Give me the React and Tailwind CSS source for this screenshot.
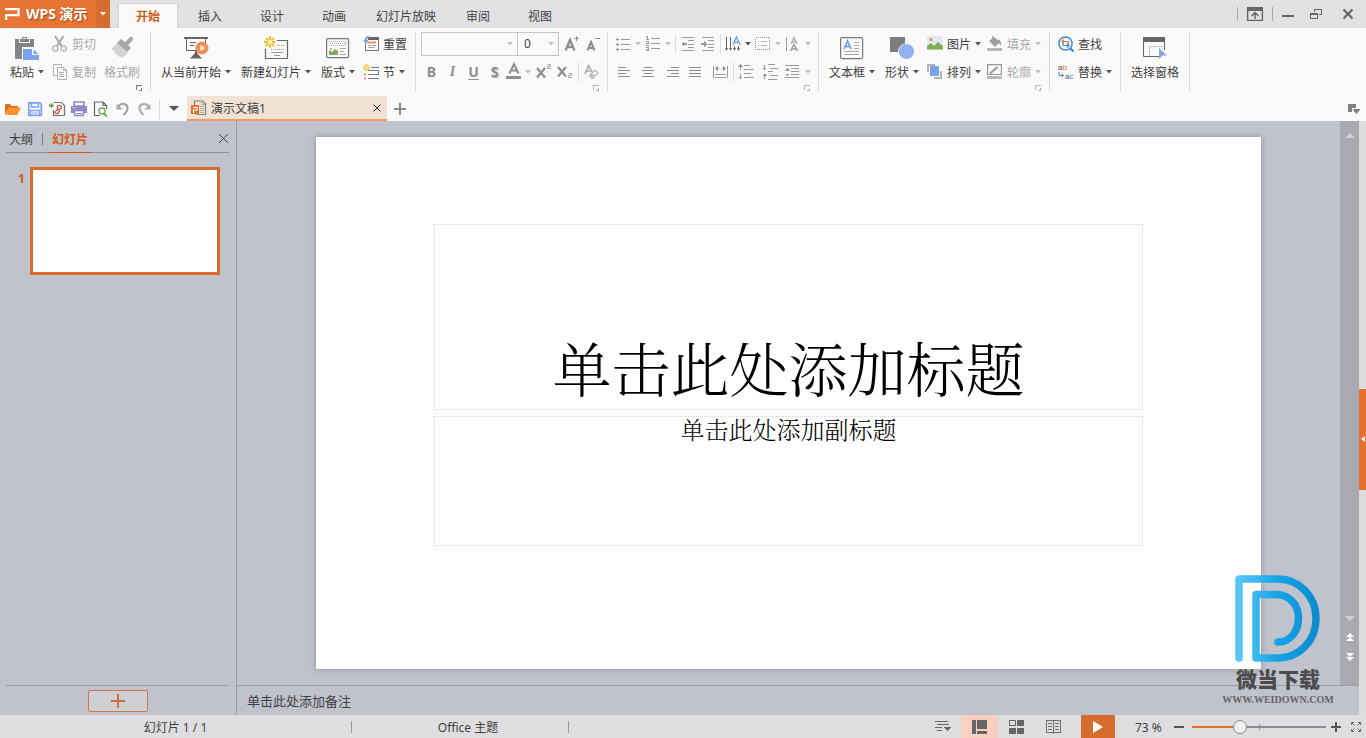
import React from "react";

const GRAY = "#999999";
const DARK = "#666666";
const BLUE = "#7ba3ec";

function Svg({ w = 16, h = 16, children, crisp = false }) {
  return (
    <svg
      width={w}
      height={h}
      viewBox={`0 0 ${w} ${h}`}
      fill="none"
      aria-hidden="true"
      className="block shrink-0 overflow-visible"
      shapeRendering={crisp ? "crispEdges" : "auto"}
    >
      {children}
    </svg>
  );
}

function Caret({ color = "#555555" }) {
  return (
    <Svg w={6} h={4}>
      <path d="M0 0h6L3 3.5z" fill={color} />
    </Svg>
  );
}

/* ---------- large ribbon icons ---------- */

const PasteIcon = () => (
  <Svg w={24} h={24}>
    <path d="M0 3h4v4h11V3h4v8H7v12H0z" fill="#858585" />
    <path d="M5 6V3h2V1h5v2h2v3z" fill="#858585" />
    <rect x="8" y="2" width="3" height="1" fill="#fafafa" />
    <path d="M8 13h9v6h7v5H8z" fill={BLUE} />
    <path d="M18.500 13.500l5 4.500h-5z" fill={BLUE} />
  </Svg>
);

const BrushIcon = () => (
  <Svg w={24} h={24}>
    <path d="M7 7l11 10-6 5c-1-1-2-1-2-2l-2 1-1-3-2 0-1-3-3-2c3-2 4-4 6-6z" fill="#d2d2d2" />
    <path d="M7 7l4-4 4 3 5-5c2-1 4 1 3 3l-5 5 3 3-4 4z" fill="#a8a8a8" />
  </Svg>
);

const PresentIcon = () => (
  <Svg w={24} h={24}>
    <path d="M0 2h24" stroke={DARK} strokeWidth="2" />
    <path d="M2.500 3v11.500h19V3M6 6.500h6M6 9.500h4" stroke={DARK} />
    <path d="M11 15h2v2l5 5.500H6l5-5.500z" fill={DARK} />
    <circle cx="18" cy="12" r="6.500" fill="#ee9055" />
    <path d="M16.500 9l4.500 3-4.500 3z" fill="#fff" />
  </Svg>
);

const Spark = ({ s = 1 }) => (
  <g transform={`scale(${s})`}>
    <path
      d="M6 0v12M0 6h12M2 2l8 8M10 2l-8 8"
      stroke="#f8b92c"
      strokeWidth="2"
      strokeDasharray="3.500 4.500"
    />
    <circle cx="6" cy="6" r="2.800" fill="#fff1a8" stroke="#f8c943" />
  </g>
);

const NewSlideIcon = () => (
  <Svg w={24} h={24}>
    <path d="M13 4.500h10.500v18h-22V13" stroke={DARK} strokeWidth="1.200" />
    <path d="M13 9.500h8M7 13.500h14" stroke={GRAY} strokeDasharray="1 1" />
    <path d="M7 16.500h12M10 19.500h6" stroke={GRAY} />
    <Spark />
  </Svg>
);

const LayoutIcon = () => (
  <Svg w={24} h={24}>
    <rect x="0.600" y="2.600" width="22" height="19" rx="1" stroke="#777" strokeWidth="1.200" />
    <path d="M3 5.500h17M4 7.500h17M3 9.500h17" stroke="#aaa" strokeDasharray="1 1" />
    <path d="M3 18v-4l3 2 3-3 3 2v4H3z" fill="#79ad58" />
    <circle cx="5" cy="13" r="1" fill="#ee9459" />
    <path d="M14 12.500h6M14 15.500h4M14 18.500h6" stroke="#aaa" />
  </Svg>
);

const TextBoxIcon = () => (
  <Svg w={24} h={24}>
    <rect x="0.600" y="1.600" width="22" height="21" rx="1.500" stroke="#777" strokeWidth="1.200" />
    <path d="M4 13L7.500 5 11 13M5.500 10.500h4" stroke={BLUE} strokeWidth="1.800" />
    <path d="M14 6.500h5M14 9.500h5M14 12.500h5M4 15.500h15M4 18.500h15" stroke="#aaa" />
  </Svg>
);

const ShapesIcon = () => (
  <Svg w={24} h={24}>
    <path d="M0 1h15v6.500A8.500 8.500 0 0 0 8 16H0z" fill="#7d7d7d" />
    <circle cx="16.500" cy="15.500" r="7.600" fill="#90b2ee" />
  </Svg>
);

const SelectPaneIcon = () => (
  <Svg w={24} h={24}>
    <path d="M0 1h22v5H0z" fill={DARK} />
    <path d="M0.500 5v15.500h16M21.500 5v9" stroke={DARK} />
    <path d="M6.500 20v-9.500H21" stroke="#aaa" strokeDasharray="2 1.500" />
    <path d="M16 12l8 7.500h-4.500L16 23z" fill="#88a4e6" />
  </Svg>
);

/* ---------- small ribbon icons ---------- */

const CutIcon = () => (
  <Svg>
    <path d="M3 0l6.500 10M11.500 0L5 10" stroke="#a5a5a5" strokeWidth="2" />
    <circle cx="3.300" cy="12.500" r="2.600" stroke="#b0b0b0" strokeWidth="1.300" />
    <circle cx="11.700" cy="12.500" r="2.600" stroke="#b0b0b0" strokeWidth="1.300" />
  </Svg>
);

const CopyIcon = () => (
  <Svg>
    <path d="M5 11.500H1.500v-11h8V2M5.500 3.500h6l3 3v9h-9z" stroke="#b0b0b0" />
    <path d="M11.500 3.500v3h3M7 8.500h5M7 10.500h5M7 12.500h5" stroke="#b0b0b0" />
  </Svg>
);

const ResetIcon = () => (
  <Svg>
    <path d="M5 1h11v3H5z" fill={DARK} />
    <path d="M15.500 3v11.500h-13V7" stroke="#777" />
    <path d="M4 6.500h9" stroke="#ee9459" strokeWidth="2" />
    <path d="M5 9.500h3M9 9.500h4M5 11.500h7" stroke="#aaa" />
    <path d="M6 1C3 1 2.500 2.500 2.500 5" stroke={BLUE} strokeWidth="2" />
    <path d="M0 4h5.500L2.800 7.500z" fill={BLUE} />
  </Svg>
);

const SectionIcon = () => (
  <Svg>
    <path d="M8 3.500h8M5 6.500h10.500v4H5M5 14.500h11" stroke="#777" />
    <path d="M1 10.500h2M1 14.500h2" stroke="#ee7a45" strokeWidth="1.500" />
    <Spark s={0.6} />
  </Svg>
);

const PictureIcon = () => (
  <Svg>
    <rect width="16" height="14" fill="#e3e8ee" />
    <circle cx="4" cy="3.500" r="1.500" fill="#ee8844" />
    <path d="M0 13.500V10l4-3 3 3 4-4 5 4v3.500z" fill="#7eae58" />
  </Svg>
);

const ArrangeIcon = () => (
  <Svg>
    <path d="M0 0h8v2H2v6H0zM15 7v8H7v-2h6V7z" fill="#b4b4b4" />
    <rect x="3" y="2" width="9" height="10" fill={BLUE} />
  </Svg>
);

const FillIcon = () => (
  <Svg>
    <path d="M2 5l5-4 6 5-5 5z" fill="#a0a0a0" />
    <path d="M6 0v4M11 4c2 1 2.500 3 2.500 5" stroke="#a0a0a0" strokeWidth="1.500" />
    <rect y="12" width="15" height="3" fill="#b8b8b8" />
  </Svg>
);

const OutlineIcon = () => (
  <Svg>
    <path d="M0.600 10.500V0.600h13.800v9.900z" stroke="#999" strokeWidth="1.200" />
    <path d="M3 9.500L10.500 3" stroke="#999" strokeWidth="2.200" />
    <rect y="12" width="15" height="3" fill="#b8b8b8" />
  </Svg>
);

const FindIcon = () => (
  <Svg>
    <circle cx="7.500" cy="7.500" r="6.600" stroke="#3f86d8" strokeWidth="1.500" />
    <path d="M12 12l3.500 3.500" stroke="#3f86d8" strokeWidth="2.200" />
    <path d="M4 5.500h6.500V8M6 3.500l-2 2 2 2" stroke="#d3813f" strokeWidth="1.200" />
    <path d="M11 9.500H5V7M9 7.500l2 2-2 2" stroke="#3f86d8" strokeWidth="1.200" />
  </Svg>
);

const ReplaceIcon = () => (
  <Svg>
    <text x="0" y="6" fontSize="8" fontFamily="Liberation Sans, sans-serif" fill="#555">
      a<tspan fill="#d3813f">b</tspan>
    </text>
    <text x="7" y="15" fontSize="8" fontFamily="Liberation Sans, sans-serif" fill="#555">
      a<tspan fill="#3f86d8">c</tspan>
    </text>
    <path d="M1 8v3.500h4M3.500 9.500l2 2-2 2" stroke="#3f86d8" />
  </Svg>
);

/* ---------- paragraph icons ---------- */

const Lines = ({ rows, color = "#8a8a8a" }) => (
  <Svg crisp>
    {rows.map(([x, y, w], i) => (
      <rect key={i} x={x} y={y} width={w} height="1" fill={color} />
    ))}
  </Svg>
);

const BulletIcon = () => (
  <Svg crisp>
    <path d="M1 3.500h3M1 8.500h3M1 13.500h3M2.500 2v3M2.500 7v3M2.500 12v3M6 3.500h9M6 8.500h9M6 13.500h9" stroke={GRAY} />
  </Svg>
);
const NumberIcon = () => (
  <Svg crisp>
    <path d="M1 0.500h1.500V4M1 3.500h3M1 5.500h2.500v2H1.500v1.500H4M1 11.500h2.500v3H1M1.500 13h2M6 2.500h9M6 7.500h9M6 12.500h9" stroke={GRAY} />
  </Svg>
);
const OutdentIcon = () => (
  <Svg crisp>
    <path d="M2 1.500h12M8 4.500h6M8 8.500h6M8 11.500h6M2 14.500h12" stroke={GRAY} />
    <path d="M1 8l3-3v2h3v2H4v2z" fill={GRAY} />
  </Svg>
);
const IndentIcon = () => (
  <Svg crisp>
    <path d="M2 1.500h12M8 4.500h6M8 8.500h6M8 11.500h6M2 14.500h12" stroke={GRAY} />
    <path d="M7 8L4 5v2H1v2h3v2z" fill={GRAY} />
  </Svg>
);
const TextDirIcon = () => (
  <Svg>
    <path d="M1.500 1v13M5.500 1v13M9.500 10v4M13.500 10v4" stroke="#666" />
    <path d="M0 12h3l-1.500 3zM4 12h3l-1.500 3zM8 12h3l-1.500 3zM12 12h3l-1.500 3z" fill="#666" />
    <path d="M8 9l3.500-8L15 9M9 6.500h5" stroke={BLUE} strokeWidth="1.500" />
  </Svg>
);
const AlignBoxIcon = () => (
  <Svg crisp>
    <rect x="0.500" y="1.500" width="14" height="12" stroke={GRAY} strokeDasharray="1 1" />
    <path d="M3 5.500h1M6 5.500h6M3 9.500h1M6 9.500h6" stroke="#b5b5b5" />
  </Svg>
);
const StackAIcon = () => (
  <Svg>
    <path d="M1.500 1v14" stroke={GRAY} />
    <path d="M6 8l3-6.500L12 8M7 6h4" stroke="#b0b0b0" strokeWidth="1.500" />
    <path d="M5.500 15L9 8.500l3.500 6.500M7 13h4" stroke={GRAY} strokeWidth="1.500" />
  </Svg>
);
const DistributeIcon = () => (
  <Svg crisp>
    <path d="M0.500 2v12M14.500 2v12M2 10.500h11M2 13.500h11M4 4.500h2M9 4.500h2" stroke={GRAY} />
    <path d="M2 4.500l3-2.500v5zM13 4.500l-3-2.500v5z" fill={GRAY} />
  </Svg>
);
const LineSpaceIcon = () => (
  <Svg crisp>
    <path d="M2.500 1v5M2.500 10v5M6 1.500h6M6 5.500h10M6 9.500h7M6 13.500h10" stroke={GRAY} />
    <path d="M0 3l2.500-3L5 3zM0 12.500L2.500 15 5 12.500z" fill={GRAY} />
  </Svg>
);
const ParaSpaceIcon = () => (
  <Svg crisp>
    <path d="M2.500 1v5M2.500 10v5M6 0.500h7M8 4.500h8M6 7.500h5M8 11.500h8M6 15.500h9" stroke={GRAY} />
    <path d="M0 3.500L2.500 6 5 3.500zM0 12l2.500-2.500L5 12z" fill={GRAY} />
  </Svg>
);
const SpacingMenuIcon = () => (
  <Svg crisp>
    <path d="M1 1.500h14M7 4.500h8M7 7.500h8M7 10.500h8M1 13.500h14" stroke={GRAY} />
    <path d="M1 6.500L3.500 4 6 6.500zM1 9.500L3.500 12 6 9.500z" fill={GRAY} />
  </Svg>
);

const EraserIcon = () => (
  <Svg>
    <path d="M1 10L4.500 1.500 8 8M2.500 7h4" stroke="#a8a8a8" strokeWidth="1.500" />
    <path d="M6 11l5-5 3 3-5 5c-1 1-4-1-3-3z" fill="#fafafa" stroke="#b5b5b5" strokeWidth="1.200" />
    <path d="M6 11l2-2 3.500 3L9 14.500C7 14 6 13 6 11z" fill="#c0c0c0" />
  </Svg>
);

/* ---------- quick access icons ---------- */

const OpenIcon = () => (
  <Svg>
    <path d="M0 14V3h5l1.500 2H13v2H4z" fill="#dd7513" />
    <path d="M0.500 14L4 6.500h12L12.500 14z" fill="#ff9233" />
  </Svg>
);
const SaveIcon = () => (
  <Svg>
    <path d="M1.800 1.800h11l1.500 1.500v11H1.800z" stroke={BLUE} strokeWidth="1.700" />
    <path d="M4.500 2v4h7V2M3.500 14V9.500h9V14" stroke={BLUE} strokeWidth="1.400" />
    <path d="M5 12h6" stroke={BLUE} />
  </Svg>
);
const ExportIcon = () => (
  <Svg>
    <path d="M4.500 1.500h8l3 3v10h-11V9" stroke="#707070" strokeWidth="1.200" />
    <path d="M0 4.500h3" stroke="#5fa044" strokeWidth="2" />
    <path d="M2 1.500l3 3-3 3z" fill="#5fa044" />
    <path d="M8.500 5v3.500M8.500 4.500h2.500c1.500 0 2 3 0 3.500-3 1-5 1.500-5 3.500 0 1.500 3 1.500 3.500 0L11 9" stroke="#d23c34" strokeWidth="1.200" />
  </Svg>
);
const PrintIcon = () => (
  <Svg>
    <path d="M3 1h10v4H3z" stroke="#8b87cd" strokeWidth="1.600" />
    <path d="M0 5h16v7H0z" fill="#8b87cd" />
    <path d="M3.500 9.500h9v5h-9z" fill="#fafafa" stroke="#8b87cd" strokeWidth="1.400" />
    <path d="M5 12.500h6" stroke="#8b87cd" />
    <path d="M1 6.500h4" stroke="#c5c2ea" />
  </Svg>
);
const PreviewIcon = () => (
  <Svg>
    <path d="M7 14.500H1.500V1H10l3.500 3.500V8M10 1v3.500h3" stroke="#666" strokeWidth="1.200" />
    <circle cx="9" cy="10" r="3" stroke="#6aa84f" strokeWidth="1.300" />
    <path d="M11 12.500l3 3" stroke="#6aa84f" strokeWidth="2" />
  </Svg>
);
const UndoIcon = () => (
  <Svg>
    <path d="M3 5.500c3.500-4 9.500-3 9.500 1.500 0 3-2 5-4 7" stroke="#a5a5a5" strokeWidth="2.200" />
    <path d="M1.500 3v5.500H8z" fill="#a5a5a5" />
  </Svg>
);
const RedoIcon = () => (
  <Svg>
    <path d="M12 5.500C8.500 1.500 2.500 2.500 2.500 7c0 3 2 5 4 7" stroke="#b0b0b0" strokeWidth="2.200" />
    <path d="M13.500 3v5.500H7z" fill="#b0b0b0" />
  </Svg>
);
const DocIcon = () => (
  <Svg>
    <path d="M3.500 5V1h8l3 3v10.500h-9" stroke="#808080" strokeWidth="1.200" />
    <path d="M11 1.500v3h3M9 6.500h4M9 8.500h4M9 10.500h4M9 12.500h4" stroke="#aaa" />
    <path d="M0 5h8v9H0z" fill="#e8722c" />
    <path d="M2 7.500h4v2.500H2.500V13" stroke="#fff" strokeWidth="1.200" />
  </Svg>
);

/* ---------- ribbon building blocks ---------- */

function Group({ width, launcher, launcherColor = "#b5b5b5", children }) {
  return (
    <section className={`flex h-[59px] shrink-0 flex-col border-r border-[#dcdcdc] pl-[5px] ${width}`}>
      <div className="flex h-[52px] shrink-0">{children}</div>
      {launcher && (
        <button type="button" aria-label={launcher} className="mt-px mr-2 self-end">
          <Svg w={6} h={6} crisp>
            <path d="M0.500 5V0.500H6M2.500 5.500h3v-3" stroke={launcherColor} />
          </Svg>
        </button>
      )}
    </section>
  );
}

const Label = ({ children }) => <span className="pt-0.5">{children}</span>;

function BigButton({ icon, label, caret, disabled }) {
  return (
    <button type="button" className="flex shrink-0 flex-col items-center px-[5px] pt-1">
      {icon}
      <span className={`mt-1 flex h-4 items-center gap-1 ${disabled ? "text-[#a6a6a6]" : ""}`}>
        <Label>{label}</Label>
        {caret && <Caret />}
      </span>
    </button>
  );
}

function SmallButton({ icon, label, caret, disabled }) {
  return (
    <button
      type="button"
      className={`flex h-6 items-center gap-1 px-[3px] ${disabled ? "text-[#a6a6a6]" : ""}`}
    >
      {icon}
      <Label>{label}</Label>
      {caret && <Caret color={disabled ? "#c0c0c0" : "#555555"} />}
    </button>
  );
}

function Tool({ width = "w-4", label, children }) {
  return (
    <button type="button" aria-label={label} className={`flex h-6 shrink-0 items-center justify-center ${width}`}>
      {children}
    </button>
  );
}

const Column = ({ children }) => <div className="flex shrink-0 flex-col gap-1">{children}</div>;

const Combo = ({ label, width, options }) => (
  <div className={`flex h-6 items-center border border-[#c6c6c6] bg-[#fafafa] pr-1 ${width}`}>
    <select aria-label={label} className="h-[22px] min-w-0 flex-1 appearance-none bg-transparent pl-1.5 text-xs leading-5 outline-none">
      {options.map((value) => (
        <option key={value}>{value}</option>
      ))}
    </select>
    <Caret color="#c0c0c0" />
  </div>
);

const MENU = ["开始", "插入", "设计", "动画", "幻灯片放映", "审阅", "视图"];

function TitleBar() {
  return (
    <header className="flex h-7 shrink-0 bg-[#e2e2e5]">
      <button type="button" className="flex w-24 shrink-0 items-center gap-1.5 bg-[#e87433] pl-[5px] text-sm leading-4 font-bold text-white [text-shadow:1px_1px_1px_#a04a18]">
        <Svg w={15} h={12}>
          <path d="M0 1.200h13.500v6H1.200V12" stroke="#fff" strokeWidth="2.200" />
        </Svg>
        <span className="whitespace-nowrap">WPS 演示</span>
      </button>
      <button type="button" aria-label="应用菜单" className="flex w-3.5 shrink-0 items-center justify-center bg-[#d66d30]">
        <Caret color="#ffffff" />
      </button>
      <nav className="ml-[7px] flex items-end">
        {MENU.map((name, i) =>
          i === 0 ? (
            <a key={name} href="#start" className="mx-px flex h-[25px] w-[60px] items-center justify-center border border-b-0 border-[#d4d4d8] bg-[#fafafa] font-bold text-[#d35a14]">
              <Label>{name}</Label>
            </a>
          ) : (
            <a key={name} href="#menu" className={`flex h-[25px] items-center justify-center ${name.length > 2 ? "w-[82px]" : "w-[62px]"}`}>
              <Label>{name}</Label>
            </a>
          )
        )}
      </nav>
      <div className="ml-auto flex items-center">
        <div className="flex h-3.5 w-9 items-center justify-center border-x border-[#a8a8a8]">
          <button type="button" aria-label="隐藏功能区">
            <Svg>
              <path d="M0 1h16v4H0z" fill={DARK} />
              <path d="M0.600 4v10.400h14.800V4M8 13V7M4.500 10L8 6.500l3.500 3.500" stroke={DARK} strokeWidth="1.400" />
            </Svg>
          </button>
        </div>
        <button type="button" aria-label="最小化" className="flex h-7 w-[29px] items-center justify-center">
          <Svg w={12} h={6} crisp><path d="M0 5h12" stroke={DARK} strokeWidth="2" /></Svg>
        </button>
        <button type="button" aria-label="还原" className="flex h-7 w-7 items-center justify-center">
          <Svg w={12} h={10} crisp>
            <path d="M4.500 3V0.500h7v5H9" stroke={DARK} />
            <path d="M0 4h8v6H0z" fill={DARK} />
            <path d="M1 6h6v3H1z" fill="#e2e2e5" />
          </Svg>
        </button>
        <button type="button" aria-label="关闭" className="flex h-7 w-9 items-center justify-center">
          <Svg w={10} h={10}><path d="M0.500 0.500l9 9M9.500 0.500l-9 9" stroke={DARK} strokeWidth="2.200" /></Svg>
        </button>
      </div>
    </header>
  );
}

function Ribbon() {
  const lightCaret = <Caret color="#c0c0c0" />;
  return (
    <div className="flex h-16 shrink-0 items-start pt-1">
      <Group width="w-[151px]" launcher="剪贴板设置" launcherColor="#777777">
        <BigButton icon={<PasteIcon />} label="粘贴" caret />
        <Column>
          <SmallButton icon={<CutIcon />} label="剪切" disabled />
          <SmallButton icon={<CopyIcon />} label="复制" disabled />
        </Column>
        <BigButton icon={<BrushIcon />} label="格式刷" disabled />
      </Group>

      <Group width="w-[265px]">
        <BigButton icon={<PresentIcon />} label="从当前开始" caret />
        <BigButton icon={<NewSlideIcon />} label="新建幻灯片" caret />
        <BigButton icon={<LayoutIcon />} label="版式" caret />
        <Column>
          <SmallButton icon={<ResetIcon />} label="重置" />
          <SmallButton icon={<SectionIcon />} label="节" caret />
        </Column>
      </Group>

      <Group width="w-[192px]" launcher="字体设置">
        <div className="flex flex-col gap-1 font-bold text-[#8e8e8e]">
          <div className="flex items-center font-normal text-[#444444]">
            <Combo label="字体" width="w-[97px]" options={[""]} />
            <div className="-ml-px"><Combo label="字号" width="w-[42px]" options={["0"]} /></div>
            <div className="ml-0.5 flex">
              <Tool width="w-[22px]" label="增大字号">
                <Svg>
                  <path d="M1.500 14.500L6 4l4.500 10.500M3 11h6" stroke="#8e8e8e" strokeWidth="2.300" />
                  <path d="M12.500 0v5M10 2.500h5" stroke="#8e8e8e" shapeRendering="crispEdges" />
                </Svg>
              </Tool>
              <Tool width="w-[22px]" label="减小字号">
                <Svg>
                  <path d="M1.500 14.500L5 6l3.500 8.500M3 12h4.500" stroke="#8e8e8e" strokeWidth="2" />
                  <path d="M9 2.500h5" stroke="#8e8e8e" shapeRendering="crispEdges" />
                </Svg>
              </Tool>
            </div>
          </div>
          <div className="flex items-center text-sm leading-4">
            <Tool width="w-[21px]" label="加粗">B</Tool>
            <Tool width="w-[21px]" label="倾斜"><i className="font-['Liberation_Serif',serif]">I</i></Tool>
            <Tool width="w-[21px]" label="下划线"><span className="underline underline-offset-2">U</span></Tool>
            <Tool width="w-[21px]" label="阴影"><span className="[text-shadow:1px_1px_1px_#aaaaaa]">S</span></Tool>
            <Tool width="w-[18px]" label="字体颜色">
              <Svg>
                <path d="M3.500 9.500L8 0l4.500 9.500M5.500 6.500h5" stroke="#8e8e8e" strokeWidth="2" />
                <rect x="0" y="12" width="15" height="3" fill="#8e8e8e" />
              </Svg>
            </Tool>
            <Tool width="w-2.5" label="字体颜色选项">{lightCaret}</Tool>
            <Tool width="w-[21px]" label="上标">
              <Svg>
                <path d="M1 4l8 9.500M9 4l-8 9.500" stroke="#8e8e8e" strokeWidth="2.200" />
                <path d="M11.500 0.500h3v2h-3v2H15" stroke="#a5a5a5" />
              </Svg>
            </Tool>
            <Tool width="w-[21px]" label="下标">
              <Svg>
                <path d="M1 3l8 9.500M9 3l-8 9.500" stroke="#8e8e8e" strokeWidth="2.200" />
                <path d="M11.500 9.500h3v2h-3v2H15" stroke="#a5a5a5" />
              </Svg>
            </Tool>
            <div className="ml-[3px] flex h-5 items-center border-l border-[#dcdcdc]">
              <Tool width="w-[26px]" label="清除格式"><EraserIcon /></Tool>
            </div>
          </div>
        </div>
      </Group>

      <Group width="w-[211px]" launcher="段落设置">
        <Column>
          <div className="flex h-6 items-center">
            <div className="flex h-5 w-[63px] items-center border-r border-[#dcdcdc] pl-0.5">
              <Tool label="项目符号"><BulletIcon /></Tool>
              <Tool width="w-3.5" label="项目符号选项">{lightCaret}</Tool>
              <Tool label="编号"><NumberIcon /></Tool>
              <Tool width="w-3.5" label="编号选项">{lightCaret}</Tool>
            </div>
            <div className="flex h-5 w-[45px] items-center justify-center border-r border-[#dcdcdc]">
              <Tool width="w-5" label="减少缩进"><OutdentIcon /></Tool>
              <Tool width="w-5" label="增加缩进"><IndentIcon /></Tool>
            </div>
            <div className="flex h-5 items-center pl-1">
              <Tool label="文字方向"><TextDirIcon /></Tool>
              <Tool width="w-3.5" label="文字方向选项"><Caret /></Tool>
              <Tool label="对齐文本"><AlignBoxIcon /></Tool>
              <Tool width="w-3.5" label="对齐文本选项">{lightCaret}</Tool>
              <Tool label="文字排列"><StackAIcon /></Tool>
              <Tool width="w-3.5" label="文字排列选项">{lightCaret}</Tool>
            </div>
          </div>
          <div className="flex h-6 items-center">
            <div className="flex h-5 w-[121px] items-center border-r border-[#dcdcdc]">
              <Tool width="w-6" label="左对齐"><Lines rows={[[1, 3, 8], [1, 6, 12], [1, 9, 8], [1, 12, 12]]} /></Tool>
              <Tool width="w-6" label="居中"><Lines rows={[[3, 3, 8], [1, 6, 12], [3, 9, 8], [1, 12, 12]]} /></Tool>
              <Tool width="w-6" label="右对齐"><Lines rows={[[6, 3, 8], [2, 6, 12], [6, 9, 8], [2, 12, 12]]} /></Tool>
              <Tool width="w-6" label="两端对齐"><Lines rows={[[0, 3, 12], [0, 6, 12], [0, 9, 12], [0, 12, 12]]} /></Tool>
              <Tool width="w-6" label="分散对齐"><DistributeIcon /></Tool>
            </div>
            <Tool width="w-6" label="行距"><LineSpaceIcon /></Tool>
            <Tool width="w-6" label="段落间距"><ParaSpaceIcon /></Tool>
            <Tool width="w-5" label="间距"><SpacingMenuIcon /></Tool>
            <Tool width="w-3" label="间距选项">{lightCaret}</Tool>
          </div>
        </Column>
      </Group>

      <Group width="w-[231px]" launcher="对象设置">
        <BigButton icon={<TextBoxIcon />} label="文本框" caret />
        <BigButton icon={<ShapesIcon />} label="形状" caret />
        <Column>
          <SmallButton icon={<PictureIcon />} label="图片" caret />
          <SmallButton icon={<ArrangeIcon />} label="排列" caret />
        </Column>
        <Column>
          <SmallButton icon={<FillIcon />} label="填充" caret disabled />
          <SmallButton icon={<OutlineIcon />} label="轮廓" caret disabled />
        </Column>
      </Group>

      <Group width="w-[71px]">
        <Column>
          <SmallButton icon={<FindIcon />} label="查找" />
          <SmallButton icon={<ReplaceIcon />} label="替换" caret />
        </Column>
      </Group>

      <Group width="w-[69px]">
        <BigButton icon={<SelectPaneIcon />} label="选择窗格" />
      </Group>
    </div>
  );
}

const QUICK = [
  ["打开", OpenIcon],
  ["保存", SaveIcon],
  ["输出为PDF", ExportIcon],
  ["打印", PrintIcon],
  ["打印预览", PreviewIcon],
  ["撤销", UndoIcon],
  ["恢复", RedoIcon],
];

function QuickBar() {
  return (
    <div className="flex h-[29px] shrink-0 items-end">
      <div className="flex h-[25px] items-center pr-[3px] pl-0.5">
        {QUICK.map(([name, Icon]) => (
          <Tool key={name} width="w-[22px]" label={name}><Icon /></Tool>
        ))}
      </div>
      <div className="flex h-[25px] items-center">
        <span className="h-5 w-px bg-[#dcdcdc]" />
        <Tool width="w-[27px]" label="自定义快速访问">
          <Svg w={10} h={5}><path d="M0 0h10L5 5z" fill="#555" /></Svg>
        </Tool>
      </div>
      <div className="flex h-[25px] w-[200px] items-center gap-1 border-b-2 border-[#ea9a6c] bg-[#f1e3d3] pr-1.5 pl-1">
        <DocIcon />
        <span className="flex-1 pt-0.5">演示文稿1</span>
        <button type="button" aria-label="关闭文档">
          <Svg w={8} h={8}><path d="M0.500 0.500l7 7M7.500 0.500l-7 7" stroke="#333" /></Svg>
        </button>
      </div>
      <Tool width="w-[26px]" label="新建文档">
        <Svg w={12} h={12} crisp><path d="M0 6h12M6 0v12" stroke="#888" strokeWidth="2" /></Svg>
      </Tool>
      <div className="ml-auto pr-[5px]">
        <Tool width="w-[14px]" label="窗口列表">
          <Svg w={12} h={10}><path d="M0 0h8v4H4v4H0zM5 5h7v1L8.500 10 5 6z" fill="#808080" /></Svg>
        </Tool>
      </div>
    </div>
  );
}

function SlidePanel() {
  return (
    <aside className="flex w-[237px] shrink-0 flex-col border-r border-[#9b9ca4] pr-[7px] pl-1.5">
      <div className="flex h-8 shrink-0 items-center border-b border-[#8f9097] pt-1">
        <a href="#outline" className="pt-0.5 pl-[3px]">大纲</a>
        <span className="ml-[9px] h-3 w-px bg-[#77787e]" />
        <a href="#slides" className="-mb-px ml-1.5 flex h-7 items-center border-b border-[#d35a14] px-[3px] font-bold text-[#d35a14]">
          <Label>幻灯片</Label>
        </a>
        <button type="button" aria-label="关闭窗格" className="ml-auto">
          <Svg w={11} h={11}><path d="M1 1l9 9M10 1l-9 9" stroke="#444" /></Svg>
        </button>
      </div>
      <ol className="flex flex-1 flex-col pt-3.5 pl-3">
        <li className="flex items-start gap-[5px]">
          <span className="mt-1 w-[7px] text-xs leading-4 font-bold text-[#d35a14]">1</span>
          <button type="button" aria-label="幻灯片 1" className="h-[108px] w-[190px] border-3 border-[#d76c2c] bg-white" />
        </li>
      </ol>
      <div className="flex h-[30px] shrink-0 items-start justify-center border-t border-[#9b9ca4] pt-1">
        <button type="button" aria-label="新建幻灯片" className="flex h-[22px] w-[60px] items-center justify-center rounded-[2px] border border-[#cc7748] bg-[#cfd0d4]">
          <Svg w={14} h={14} crisp><path d="M0 7h14M7 0v14" stroke="#c96e3f" strokeWidth="2" /></Svg>
        </button>
      </div>
    </aside>
  );
}

function ScrollBar() {
  return (
    <div className="flex w-[19px] shrink-0 flex-col items-center justify-between bg-[#a9a9b2] pt-3 pb-6">
      <button type="button" aria-label="向上滚动"><Svg w={10} h={5}><path d="M0 5h10L5 0z" fill="#cfcfd4" /></Svg></button>
      <div className="flex flex-col items-center gap-3">
        <button type="button" aria-label="向下滚动"><Svg w={10} h={5}><path d="M0 0h10L5 5z" fill="#cfcfcc" /></Svg></button>
        <button type="button" aria-label="上一张"><Svg w={8} h={8}><path d="M0 4h8L4 0zM0 8h8L4 4z" fill="#fff" /></Svg></button>
        <button type="button" aria-label="下一张"><Svg w={8} h={8}><path d="M0 0h8L4 4zM0 4h8L4 8z" fill="#fff" /></Svg></button>
      </div>
    </div>
  );
}

function Watermark() {
  return (
    <div className="pointer-events-none absolute right-[33px] bottom-[7px] flex w-[110px] flex-col items-center text-[#4b4b4e]">
      <Svg w={86} h={88}>
        <defs>
          <linearGradient id="wm" x1="0" y1="0" x2="1" y2="0">
            <stop offset="0" stopColor="#56c6f6" />
            <stop offset="0.500" stopColor="#14a5e6" />
            <stop offset="1" stopColor="#0e8bd0" />
          </linearGradient>
        </defs>
        <path
          d="M4 83V4h39c21 0 38 17 38 39.500S64 83 43 83H21V19.500h20c13 0 22.500 10 22.500 23.500S55 67 43 67"
          stroke="url(#wm)"
          strokeWidth="7.500"
          strokeLinecap="round"
          strokeLinejoin="round"
        />
      </Svg>
      <span className="mt-1 text-[21px] leading-6 font-black whitespace-nowrap">微当下载</span>
      <span className="mt-px font-['Liberation_Serif',serif] text-[10px] leading-4 font-bold whitespace-nowrap text-[#66666a]">WWW.WEIDOWN.COM</span>
    </div>
  );
}

function Workspace() {
  return (
    <main className="relative flex min-h-0 flex-1 bg-[#c0c2cc]">
      <SlidePanel />
      <div className="flex min-w-0 flex-1 flex-col">
        <div className="flex min-h-0 flex-1">
          <div className="flex min-w-0 flex-1 px-[79px] py-4">
            <article className="flex flex-1 flex-col bg-white px-[12.5%] pt-[87px] text-center font-light text-black shadow-[0_0_5px_1px_#9a9ca6]">
              <div className="flex h-[41.7%] flex-col justify-end border border-dotted border-[#d8d8d8] pb-1.5">
                <h1 className="font-['SimSun','Noto_Serif_CJK_SC','Noto_Sans_CJK_SC',serif] text-[59px] leading-[72px] whitespace-nowrap">单击此处添加标题</h1>
              </div>
              <div className="mt-1.5 h-[29.2%] border border-dotted border-[#d8d8d8]">
                <p className="font-['SimSun','Noto_Serif_CJK_SC','Noto_Sans_CJK_SC',serif] text-2xl leading-6 whitespace-nowrap">单击此处添加副标题</p>
              </div>
            </article>
          </div>
          <ScrollBar />
        </div>
        <div className="flex h-[30px] shrink-0 items-center border-t border-[#9b9ca4] pl-2.5 text-[13px]">单击此处添加备注</div>
      </div>
      <div className="flex w-[7px] shrink-0 flex-col items-center justify-center bg-[#dddde0] pt-[42px]">
        <button type="button" aria-label="展开任务窗格" className="flex h-[101px] w-full items-center justify-center bg-[#e4702b]">
          <Svg w={4} h={6}><path d="M4 0v6L0 3z" fill="#fff" /></Svg>
        </button>
      </div>
      <Watermark />
    </main>
  );
}

function StatusBar() {
  return (
    <footer className="flex h-[23px] shrink-0 items-center bg-[#dedee0]">
      <span className="w-[351px] pt-0.5 text-center">幻灯片 1 / 1</span>
      <span className="h-3 w-px bg-[#9a9a9e]" />
      <span className="w-[216px] pt-0.5 pl-4 text-center">Office 主题</span>
      <span className="h-3 w-px bg-[#9a9a9e]" />
      <div className="ml-auto flex h-full items-center">
        <Tool width="w-[37px]" label="备注">
          <Svg crisp>
            <path d="M0 2.500h13M2 5.500h12M0 8.500h7M2 11.500h5" stroke={DARK} />
            <path d="M8 8h8l-4 4z" fill={DARK} />
          </Svg>
        </Tool>
        <button type="button" aria-label="普通视图" className="flex h-full w-[37px] items-center justify-center bg-[#f9d0bf]">
          <Svg w={15} crisp><path d="M0 1h4v14H0zM5 1h10v9H5zM5 12h10v3H5z" fill={DARK} /></Svg>
        </button>
        <Tool width="w-[37px]" label="浏览视图">
          <Svg w={15} crisp>
            <path d="M8 1h7v6H8zM0 9h7v6H0zM8 9h7v6H8z" fill={DARK} />
            <path d="M0.500 1.500h6v5h-6z" stroke={DARK} />
          </Svg>
        </Tool>
        <Tool width="w-[37px]" label="阅读视图">
          <Svg w={15} crisp>
            <path d="M0.500 1.500h14v12h-14zM7.500 1v14M2 4.500h4M2 7.500h4M2 10.500h4M9 4.500h4M9 7.500h4M9 10.500h4" stroke="#707070" />
          </Svg>
        </Tool>
        <button type="button" aria-label="放映" className="ml-[9px] flex h-full w-[34px] items-center justify-center bg-[#d76c2c]">
          <Svg w={10} h={12}><path d="M0 0l10 6-10 6z" fill="#fff" /></Svg>
        </button>
        <span className="w-[54px] pt-0.5 pl-5 whitespace-nowrap">73 %</span>
        <Tool width="w-[20px]" label="缩小">
          <Svg w={10} h={2} crisp><path d="M0 1h10" stroke="#555" strokeWidth="2" /></Svg>
        </Tool>
        <div className="relative ml-[3px] flex h-full w-[134px] items-center">
          <span className="absolute left-1/2 h-1.5 w-px bg-[#8b8b93]" />
          <input
            type="range"
            aria-label="显示比例"
            min="0"
            max="100"
            defaultValue="34"
            className="relative h-3.5 w-full appearance-none bg-[linear-gradient(to_right,#e4702b_35%,#8b8b93_35%)] bg-[length:100%_2px] bg-center bg-no-repeat [&::-webkit-slider-thumb]:size-3.5 [&::-webkit-slider-thumb]:appearance-none [&::-webkit-slider-thumb]:rounded-full [&::-webkit-slider-thumb]:border [&::-webkit-slider-thumb]:border-[#8a8a8a] [&::-webkit-slider-thumb]:bg-[#f2f2f2]"
          />
        </div>
        <Tool width="w-[20px]" label="放大">
          <Svg w={10} h={10} crisp><path d="M0 5h10M5 0v10" stroke="#555" strokeWidth="2" /></Svg>
        </Tool>
        <Tool width="w-5" label="适应窗口">
          <Svg w={10} h={10}>
            <path d="M0.500 3V0.500H3M7 0.500h2.500V3M9.500 7v2.500H7M3 9.500H0.500V7M1 1l2.500 2.500M9 1L6.500 3.500M9 9L6.500 6.500M1 9l2.500-2.500" stroke="#666" />
          </Svg>
        </Tool>
      </div>
    </footer>
  );
}

export default function App() {
  return (
    <div className="flex h-screen flex-col overflow-hidden bg-[#fafafa] font-['Noto_Sans','Noto_Sans_CJK_SC',sans-serif] text-xs leading-4 whitespace-nowrap text-[#3f3f3f]">
      <TitleBar />
      <Ribbon />
      <QuickBar />
      <Workspace />
      <StatusBar />
    </div>
  );
}
